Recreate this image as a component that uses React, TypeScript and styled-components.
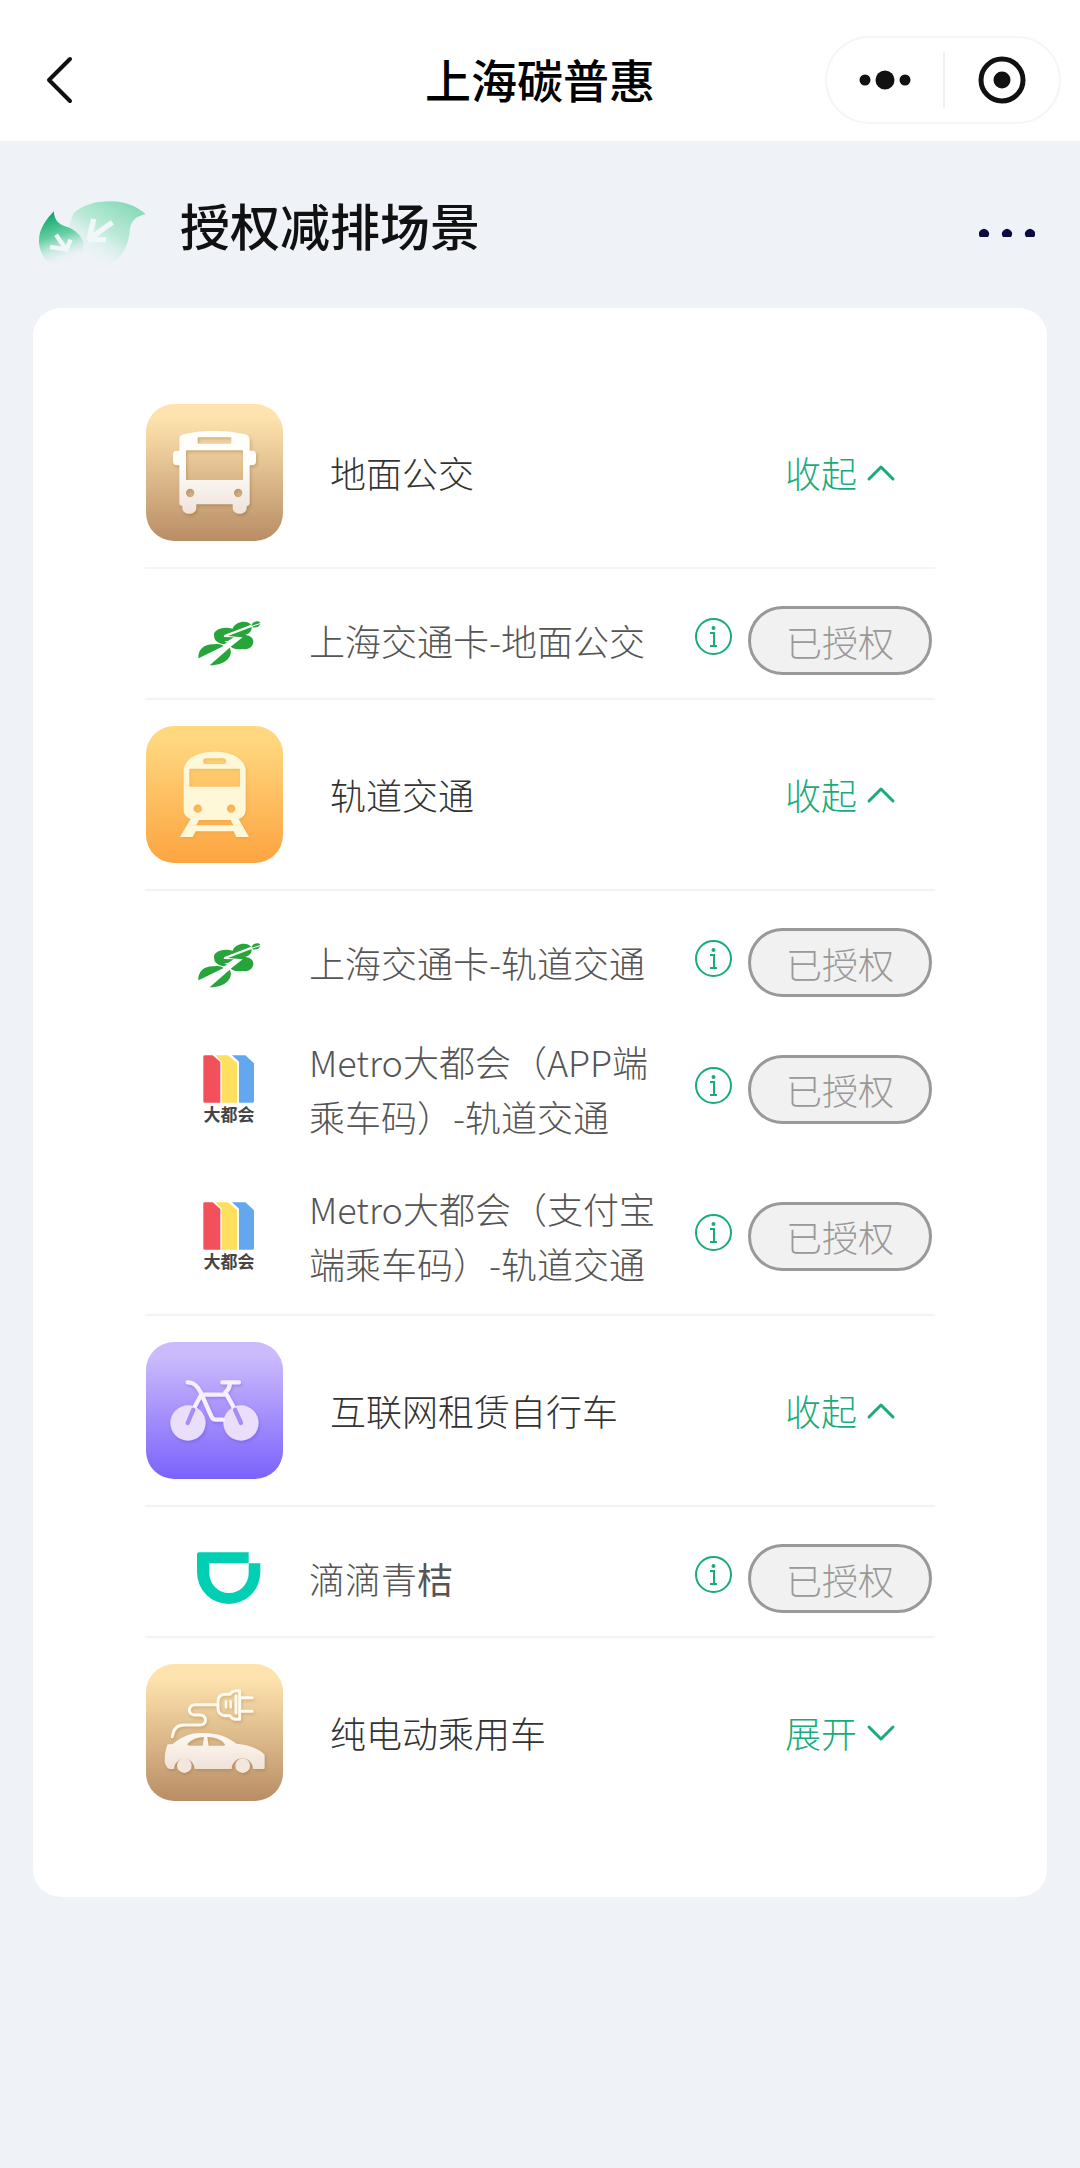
import React, { useState } from "react";
import styled, { createGlobalStyle } from "styled-components";

const GlobalStyle = createGlobalStyle`
  *, *::before, *::after { box-sizing: border-box; }
  body {
    margin: 0;
    background: #eff3f8;
    font-family: "Noto Sans CJK SC", "Noto Sans", sans-serif;
    font-size: 36px;
    font-weight: 300;
    color: #333;
  }
  button {
    font: inherit;
    color: inherit;
    margin: 0;
    padding: 0;
    border: 0;
    background: none;
    cursor: pointer;
  }
  svg { display: block; flex: none; }
`;

const NavBar = styled.header`
  display: grid;
  grid-template-columns: 1fr auto 1fr;
  align-items: center;
  padding: 36px 19px 17px;
  background: #fff;
`;

const NavTitle = styled.h1`
  margin: 0;
  padding-bottom: 4px;
  font-size: 46px;
  line-height: 60px;
  font-weight: 500;
  color: #000;
`;

const BackButton = styled.button`
  justify-self: start;
  padding: 20px;
`;

const Capsule = styled.div`
  justify-self: end;
  display: flex;
  align-items: center;
  height: 88px;
  border: 2px solid #f5f5f5;
  border-radius: 44px;
`;

const CapsuleButton = styled.button`
  display: flex;
  align-items: center;
  justify-content: center;
  width: 116px;
  height: 56px;
  & + & { border-left: 2px solid #f0f0f0; }
`;

const SectionBar = styled.div`
  display: flex;
  align-items: center;
  padding: 45px 45px 39px 35px;
`;

const SectionTitle = styled.h2`
  flex: 1;
  margin: 0 0 0 32px;
  padding-bottom: 8px;
  font-size: 50px;
  line-height: 70px;
  font-weight: 500;
  color: #111;
`;

const Card = styled.main`
  margin: 0 33px;
  padding: 70px 112px;
  border-radius: 28px;
  background: #fff;
`;

const GroupHeader = styled.div`
  display: flex;
  align-items: center;
  padding: 26px 38px 26px 1px;
`;

const Tile = styled.div<{ $from: string; $to: string }>`
  width: 137px;
  height: 137px;
  border-radius: 28px;
  overflow: hidden;
  background: linear-gradient(${(p) => p.$from} 10%, ${(p) => p.$to});
`;

const GroupName = styled.h3`
  flex: 1;
  margin: 0 0 0 47px;
  font-size: 36px;
  line-height: 55px;
  font-weight: 300;
`;

const Toggle = styled.button`
  display: flex;
  align-items: center;
  gap: 8px;
  line-height: 55px;
  color: #1aab7c;
`;

const Providers = styled.ul`
  margin: 0;
  padding: 0 3px 23px 52px;
  list-style: none;
  border: solid #f3f3f3;
  border-width: 2px 0;
`;

const Provider = styled.li`
  display: flex;
  align-items: center;
  min-height: 69px;
  margin-top: 37px;
`;

const Logo = styled.div`
  display: flex;
  flex-direction: column;
  align-items: center;
  width: 64px;
`;

const LogoCaption = styled.span`
  font-size: 17px;
  line-height: 20px;
  font-weight: 700;
  color: #444;
`;

const ProviderName = styled.span`
  flex: 1;
  margin: 0 20px 0 48px;
  line-height: 55px;
  color: #555;
`;

const Fallback = styled.span`
  font-weight: 400;
`;

const InfoButton = styled.button`
  margin: 0 16px 8px 0;
`;

const StatusButton = styled.button`
  width: 184px;
  height: 69px;
  border: 3px solid #999;
  border-radius: 35px;
  background: #f1f1f1;
  color: #999;
  cursor: default;
`;

const LeafIcon = () => (
  <svg width="113" height="83" viewBox="45 20 339 249" aria-hidden="true">
    <defs>
      <linearGradient id="leafBig" x1="0.9" y1="0.1" x2="0.3" y2="0.95">
        <stop offset="0" stopColor="#86dab7" />
        <stop offset="0.5" stopColor="#b4e8d3" stopOpacity="0.85" />
        <stop offset="1" stopColor="#eff3f8" stopOpacity="0" />
      </linearGradient>
      <linearGradient id="leafSmall" x1="0.3" y1="0" x2="0.55" y2="1">
        <stop offset="0" stopColor="#0aa368" />
        <stop offset="0.45" stopColor="#6bd0a6" />
        <stop offset="0.95" stopColor="#eff3f8" stopOpacity="0" />
      </linearGradient>
    </defs>
    <path fill="url(#leafBig)" d="M160 102C188 76 230 65 275 66c40 1 75 14 102 39-28 5-46 20-48 50-3 52-36 107-94 107-30 0-45-30-45-67-5-24-22-40-45-48z" />
    <path fill="url(#leafSmall)" d="M101 96c3 24 12 38 34 45 32 9 52 30 56 54 3 36-26 68-66 68-42 0-68-38-68-78 0-38 22-64 44-89z" />
    <g fill="none" stroke="#f1f7f9" strokeWidth="16">
      <path d="M277 129l-66 48M221 119l-14 62M204 181h54" />
      <path d="M108 166l30 44M90 203l50 8 12-30" strokeWidth="13" />
    </g>
  </svg>
);

const BusIcon = () => (
  <svg width="137" height="137" viewBox="48 42 411 411" aria-hidden="true">
    <defs>
      <linearGradient id="busFill" x1="0" y1="0" x2="0" y2="1">
        <stop offset="0.4" stopColor="#fffefb" />
        <stop offset="1" stopColor="#efe3dc" />
      </linearGradient>
    </defs>
    <path
      fill="url(#busFill)"
      fillRule="evenodd"
      filter="drop-shadow(4px 6px 5px rgba(120,80,30,.28))"
      d="M148 148q0-13 14-16 90-20 182 0 15 4 15 17v33h8q11 0 11 12v20q0 12-12 12h-7v116q-2 6-9 7v4c0 24-42 24-42 0v-10H199v10c0 24-42 24-42 0v-5q-9-1-9-8V226h-7q-12 0-12-12v-20q0-12 12-12h7zM206 142q-3 0-3 3v12q0 4 3 4h95q3 0 3-4v-12q0-3-3-3zM170 181q-2 0-2 3v83q0 3 2 3h166q3 0 3-3v-83q0-3-3-3zM193 309a12.500 12.500 0 1 0-25 0 12.500 12.500 0 1 0 25 0zM337 309a12.500 12.500 0 1 0-25 0 12.500 12.500 0 1 0 25 0z"
    />
  </svg>
);

const TrainIcon = () => (
  <svg width="137" height="137" viewBox="48 46 411 411" aria-hidden="true">
    <path
      fill="#fff8d8"
      fillRule="evenodd"
      filter="drop-shadow(3px 4px 5px rgba(200,110,20,.2))"
      d="M161 175c8-37 48-52 93-52s85 15 93 52v125q-2 18-21 25l31 54h-38l-8-17H197l-9 17h-38l32-54q-19-6-21-25zM228 143a8.500 8.500 0 0 0 0 17h52a8.500 8.500 0 0 0 0-17zM181 174q-3 0-3 3v48q0 3 3 3h146q3 0 3-3v-48q0-3-3-3zM216 294a12.500 12.500 0 1 0-25 0 12.500 12.500 0 1 0 25 0zM316 294a12.500 12.500 0 1 0-25 0 12.500 12.500 0 1 0 25 0zM207 328l-8 16h111l-8-16z"
    />
  </svg>
);

const BikeIcon = () => (
  <svg width="137" height="137" viewBox="48 63 411 411" aria-hidden="true">
    <g filter="drop-shadow(3px 5px 5px rgba(70,40,190,.25))">
      <circle cx="174" cy="306" r="53" fill="#eadffb" />
      <circle cx="333" cy="306" r="53" fill="#eadffb" />
      <g fill="none" stroke="#f6effd" strokeWidth="13" strokeLinecap="round" strokeLinejoin="round">
        <path d="M173 184c18-1 30 12 38 28l34 76q4 8 12 8h22M216 221h72M192 262l20-38M327 184h-50M300 188q-2 16-14 26l27 48" />
      </g>
    </g>
    <path d="M190 266l-17 40M315 266l18 40" fill="none" stroke="#a48df5" strokeWidth="13" strokeLinecap="round" />
  </svg>
);

const CarIcon = () => (
  <svg width="137" height="137" viewBox="48 99 411 411" aria-hidden="true">
    <defs>
      <linearGradient id="carFill" x1="0" y1="0" x2="0" y2="1">
        <stop offset="0" stopColor="#fffaf2" />
        <stop offset="1" stopColor="#efe2d8" />
      </linearGradient>
    </defs>
    <g filter="drop-shadow(3px 5px 5px rgba(120,80,30,.25))">
      <path
        fill="url(#carFill)"
        fillRule="evenodd"
        d="M113 340h14c23-20 52-34 84-34 45-2 77 8 109 32 36 4 65 14 82 31q2 2 2 6v36q0 3-3 3h-32a32 32 0 0 0-64 0H194a31 31 0 0 0-62 0h-12q-6 0-9-5-7-8-7-20 0-29 9-49zM172 339q0 4 6 5h40l4-26q-30 0-50 21zM232 318l4 26h46q5-2 1-6-16-20-51-20z"
      />
      <circle cx="163" cy="404" r="22" fill="#f2e6dd" />
      <circle cx="338" cy="404" r="22" fill="#f2e6dd" />
      <g fill="none" stroke="#fffaf0" strokeWidth="9" strokeLinecap="round" strokeLinejoin="round">
        <path d="M127 317c3-23 15-35 35-35h46q18 0 19-15-1-14-18-15h-16q-14-1-15-15 1-15 18-16h64" />
        <path d="M284 190h16q6-10 17-11h12v86h-12q-11-1-17-11h-16q-20-2-20-22v-20q0-20 20-22zM318 194v52M333 200h34M333 241h34" />
        <path d="M288 212v17M302 212v17" strokeWidth="8" />
      </g>
    </g>
  </svg>
);

const TransitCardLogo = () => (
  <svg width="64" height="54" viewBox="14 -1 192 162" role="img" aria-label="上海交通卡">
    <g fill="#28a53a">
      <path d="M18 132C16 104 38 88 66 90c12-3 22 0 28 5L22 130z" />
      <path d="M52 153l60-53c12 20-6 52-60 53z" />
      <path d="M66 68C58 48 90 34 121 43c8-24 46-26 55-12L96 62l-2 6 30 1-16 10c-14 3-34 2-42-7z" />
      <path d="M66 72l24 4 14 9-10 5c-14-2-24-8-28-18z" />
      <path d="M178 38c1 16-12 26-32 24 24-2 38 6 37 22-2 16-18 24-34 20-12 2-24 0-34-7l36-28-44-4z" />
      <path d="M177 33c6-14 24-16 27-7l-26 8zM179 37l25-8c-4 10-18 14-25 8z" />
    </g>
  </svg>
);

const MetroLogo = () => (
  <>
    <svg width="52" height="49" viewBox="68 104 156 147" role="img" aria-label="Metro">
      <path fill="#f2505a" d="M69 109q0-4 4-4h24l23 20v122H73q-4 0-4-4z" />
      <path fill="#ffe05e" d="M106 105h37l27 22v120h-46V124z" />
      <path fill="#63a8ef" d="M155 105h40l26 24v114q0 4-4 4h-41V124z" />
    </svg>
    <LogoCaption>大都会</LogoCaption>
  </>
);

const DidiLogo = () => (
  <svg width="64" height="53" viewBox="200 701 192 159" role="img" aria-label="滴滴">
    <path fill="#00cfb4" d="M206 702h149v33H237v30a59 59 0 0 0 118 0v-30h35v27a95 95 0 0 1-190 0v-54q0-6 6-6z" />
  </svg>
);

const InfoIcon = () => (
  <svg width="37" height="37" viewBox="0 0 37 37" fill="none" stroke="#1aab7c" strokeWidth="2" aria-hidden="true">
    <circle cx="18.500" cy="18.500" r="17.500" />
    <path d="M15 15h4v13M15 28h7" />
    <circle cx="18.500" cy="10" r="1" />
  </svg>
);

const Chevron = ({ open }: { open: boolean }) => (
  <svg width="32" height="20" viewBox="0 0 32 20" fill="none" stroke="#1aab7c" strokeWidth="3" strokeLinecap="round" strokeLinejoin="round" aria-hidden="true">
    <path d={open ? "M4 16L16 4l12 12" : "M4 4l12 12L28 4"} />
  </svg>
);

type ProviderData = { logo: React.ReactNode; name: React.ReactNode };
type GroupData = {
  name: string;
  icon: React.ReactNode;
  from: string;
  to: string;
  providers: ProviderData[];
};

const groups: GroupData[] = [
  {
    name: "地面公交",
    icon: <BusIcon />,
    from: "#fee3ae",
    to: "#b98d65",
    providers: [{ logo: <TransitCardLogo />, name: "上海交通卡-地面公交" }],
  },
  {
    name: "轨道交通",
    icon: <TrainIcon />,
    from: "#ffd77f",
    to: "#fda440",
    providers: [
      { logo: <TransitCardLogo />, name: "上海交通卡-轨道交通" },
      { logo: <MetroLogo />, name: "Metro大都会（APP端乘车码）-轨道交通" },
      { logo: <MetroLogo />, name: "Metro大都会（支付宝端乘车码）-轨道交通" },
    ],
  },
  {
    name: "互联网租赁自行车",
    icon: <BikeIcon />,
    from: "#cbbbfc",
    to: "#7b62fb",
    providers: [{ logo: <DidiLogo />, name: <>滴滴青<Fallback>桔</Fallback></> }],
  },
  { name: "纯电动乘用车", icon: <CarIcon />, from: "#fee3ae", to: "#b98d65", providers: [] },
];

const Group = ({ group }: { group: GroupData }) => {
  const [open, setOpen] = useState(group.providers.length > 0);
  return (
    <section>
      <GroupHeader>
        <Tile $from={group.from} $to={group.to}>{group.icon}</Tile>
        <GroupName>{group.name}</GroupName>
        <Toggle type="button" aria-expanded={open} onClick={() => setOpen(!open)}>
          {open ? "收起" : "展开"}
          <Chevron open={open} />
        </Toggle>
      </GroupHeader>
      {open && group.providers.length > 0 && (
        <Providers>
          {group.providers.map((provider, index) => (
            <Provider key={index}>
              <Logo>{provider.logo}</Logo>
              <ProviderName>{provider.name}</ProviderName>
              <InfoButton type="button" aria-label="说明"><InfoIcon /></InfoButton>
              <StatusButton type="button" disabled>已授权</StatusButton>
            </Provider>
          ))}
        </Providers>
      )}
    </section>
  );
};

export default function App() {
  return (
    <>
      <GlobalStyle />
      <NavBar>
        <BackButton type="button" aria-label="返回">
          <svg width="40" height="48" viewBox="0 0 40 48" fill="none" stroke="#111" strokeWidth="4" strokeLinejoin="round" strokeLinecap="round">
            <path d="M31 3L10 24l21 21" />
          </svg>
        </BackButton>
        <NavTitle>上海碳普惠</NavTitle>
        <Capsule>
          <CapsuleButton type="button" aria-label="菜单">
            <svg width="52" height="20" viewBox="0 0 52 20" fill="#111">
              <circle cx="6" cy="10" r="5.500" />
              <circle cx="26" cy="10" r="9.500" />
              <circle cx="46" cy="10" r="5.500" />
            </svg>
          </CapsuleButton>
          <CapsuleButton type="button" aria-label="关闭">
            <svg width="48" height="48" viewBox="0 0 48 48">
              <circle cx="24" cy="24" r="21" fill="none" stroke="#111" strokeWidth="5" />
              <circle cx="24" cy="24" r="8.500" fill="#111" />
            </svg>
          </CapsuleButton>
        </Capsule>
      </NavBar>
      <SectionBar>
        <LeafIcon />
        <SectionTitle>授权减排场景</SectionTitle>
        <button type="button" aria-label="更多">
          <svg width="56" height="18" viewBox="0 0 56 18" fill="#0b0b40">
            <path d="M1 18a5 5 0 1 1 8 0zM24 18a5 5 0 1 1 8 0zM47 18a5 5 0 1 1 8 0z" />
          </svg>
        </button>
      </SectionBar>
      <Card>
        {groups.map((group) => (
          <Group key={group.name} group={group} />
        ))}
      </Card>
    </>
  );
}
